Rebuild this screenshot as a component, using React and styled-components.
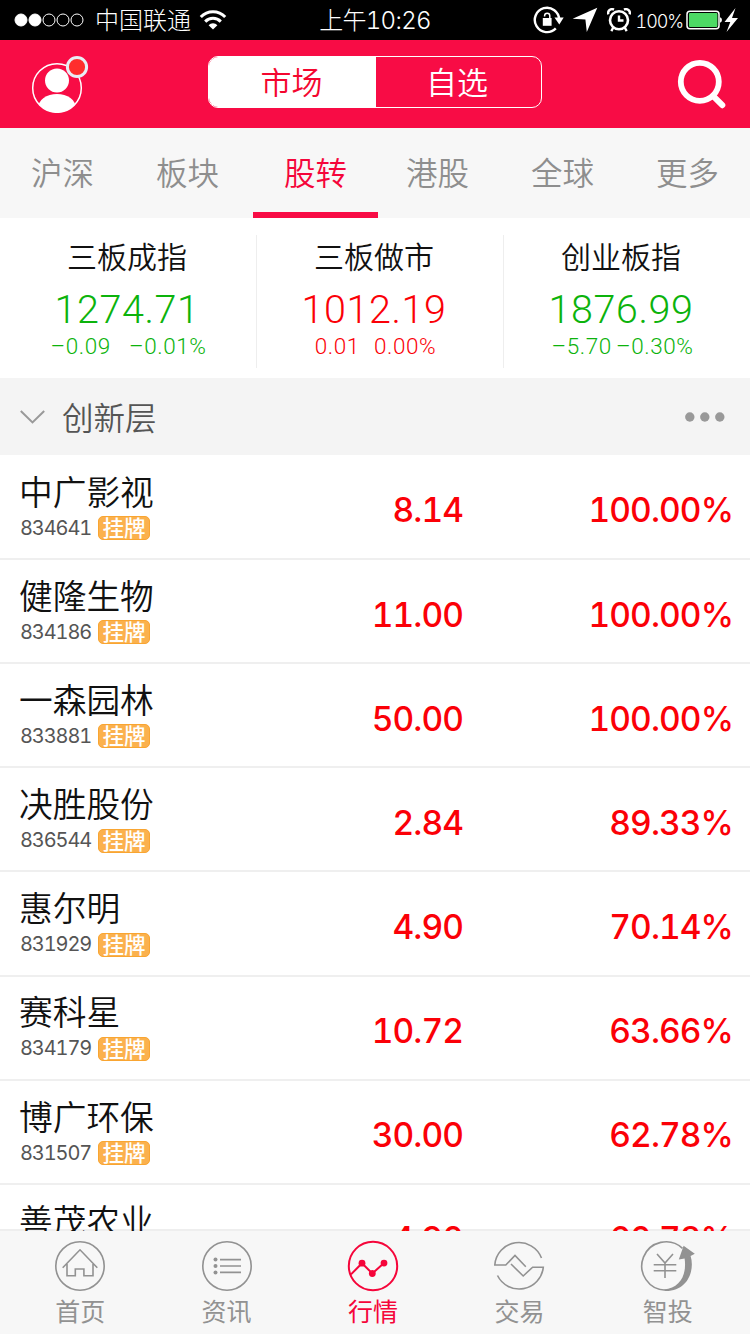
import React from "react";
import styled, { createGlobalStyle } from "styled-components";

const GlobalStyle = createGlobalStyle`
    * {
        box-sizing: border-box;
    }
    body {
        margin: 0;
        background: white;
        font-family: Inter, "Noto Sans CJK SC", sans-serif;
        font-weight: 350;
        font-variant-numeric: tabular-nums;
    }
    svg {
        display: block;
        flex: none;
    }
`;

const Screen = styled.div`
    display: flex;
    flex-direction: column;
    width: 750px;
    height: 1334px;
    overflow: hidden;
    background: white;
`;

const StatusBar = styled.div`
    display: grid;
    grid-template-columns: 1fr auto 1fr;
    align-items: center;
    flex: none;
    height: 40px;
    padding: 0 11px 0 14px;
    background: black;
    color: white;
    font-size: 24px;
    font-weight: 300;
`;

const StatusGroup = styled.div`
    display: flex;
    align-items: center;
    justify-content: ${({ end }) => (end ? "flex-end" : "flex-start")};
`;

const Carrier = styled.span`
    margin: 2px 8px 0 11px;
    line-height: 38px;
`;

const Clock = styled.span`
    margin-top: 2px;
    margin-right: 3px;
    line-height: 38px;
    letter-spacing: -0.7px;
`;

const StatusIcons = styled.div`
    display: flex;
    align-items: center;
    gap: 8.5px;
`;

const BatteryLevel = styled.span`
    margin: 2px 3px 0 5px;
    font-size: 18px;
    letter-spacing: -1.1px;
`;

const Header = styled.header`
    display: flex;
    align-items: center;
    justify-content: space-between;
    flex: none;
    height: 88px;
    padding: 0 23px 0 31px;
    background: #f80c45;
`;

const Segmented = styled.div`
    display: flex;
    width: 334px;
    height: 52px;
    margin-top: -5px;
    margin-left: -16px;
    border: 1px solid white;
    border-radius: 10px;
    overflow: hidden;
`;

const Segment = styled.div`
    width: ${({ active }) => (active ? 167 : 165)}px;
    padding-right: ${({ active }) => (active ? 2 : 3)}px;
    line-height: 52px;
    text-align: center;
    font-size: 31px;
    background: ${({ active }) => (active ? "white" : "transparent")};
    color: ${({ active }) => (active ? "#f4062f" : "white")};
`;

const Tabs = styled.nav`
    display: flex;
    flex: none;
    height: 90px;
    background: #f7f7f7;
`;

const Tab = styled.div`
    flex: none;
    width: 125px;
    height: 90px;
    margin: ${({ active }) => (active ? "0 -3px 0 3px" : 0)};
    line-height: 92px;
    text-align: center;
    font-size: 31.5px;
    color: ${({ active }) => (active ? "#f5053a" : "#8e8e8e")};
    box-shadow: ${({ active }) => (active ? "inset 0 -6px #f80c45" : "none")};
`;

const Indices = styled.section`
    display: grid;
    grid-template-columns: 257px 247px 246px;
    flex: none;
    height: 160px;
    padding: 17px 0 10px;
`;

const IndexCell = styled.div`
    display: flex;
    flex-direction: column;
    align-items: center;
    padding-right: ${({ inset }) => inset}px;
    border-right: 1px solid #eee;
    color: ${({ down }) => (down ? "#0cb30c" : "#fb0007")};
    &:last-child {
        border-right: none;
    }
`;

const IndexName = styled.div`
    font-size: 30px;
    line-height: 44px;
    color: #111;
`;

const IndexValue = styled.div`
    font-family: Roboto, sans-serif;
    font-size: 39.5px;
    font-weight: 350;
    line-height: 62px;
    letter-spacing: 0.6px;
`;

const IndexChange = styled.div`
    display: flex;
    gap: ${({ gap }) => gap}px;
    padding-left: 3px;
    font-family: Roboto, sans-serif;
    font-size: 22.5px;
    font-weight: 350;
    line-height: 10px;
    letter-spacing: 0.6px;
`;

const SectionBar = styled.div`
    display: flex;
    align-items: center;
    flex: none;
    height: 77px;
    padding: 0 25px 0 20px;
    background: #f4f4f4;
`;

const SectionTitle = styled.h2`
    flex: 1;
    margin: 5px 0 0 17px;
    font-size: 31.5px;
    font-weight: 350;
    line-height: 72px;
    color: #555;
`;

// the divider sits under the last, half visible row
const List = styled.div`
    flex: 1;
    min-height: 0;
    overflow: hidden;
    padding-top: 0.8px;
    box-shadow: inset 0 -2px #eee;
`;

const Row = styled.div`
    display: grid;
    grid-template-columns: 200px 244px 1fr;
    align-items: center;
    height: 104.17px;
    padding: 0 17px 0 19px;
    border-bottom: 2px solid #efefef;
`;

const StockName = styled.div`
    margin-bottom: 2.6px;
    font-size: 33.7px;
    line-height: 40px;
    color: #111;
`;

const StockMeta = styled.div`
    display: flex;
    align-items: center;
    height: 26px;
`;

const StockCode = styled.span`
    width: 79px;
    padding-left: 1px;
    font-size: 20px;
    font-weight: 400;
    line-height: 22px;
    padding-bottom: 1px;
    letter-spacing: -1.1px;
    color: #555;
`;

const Badge = styled.span`
    width: 52px;
    height: 24px;
    border: 1px solid #f9a531;
    border-radius: 5px;
    background: #fbb14d;
    color: white;
    font-size: 21.5px;
    font-weight: 500;
    line-height: 22px;
    text-align: center;
`;

const Figure = styled.div`
    margin-top: 7px;
    text-align: right;
    font-size: 33.5px;
    font-weight: 450;
    letter-spacing: -0.9px;
    color: #fb0007;
`;

const TabBar = styled.nav`
    display: flex;
    flex: none;
    height: 103px;
    padding: 0 11px 0 7px;
    background: #f7f7f7;
`;

const TabBarItem = styled.div`
    display: flex;
    flex: 1;
    flex-direction: column;
    align-items: center;
    padding-top: 9px;
    font-size: 25px;
    font-weight: 400;
    line-height: 39px;
    color: ${({ active }) => (active ? "#f5053a" : "#929292")};
    &:last-child span {
        padding-left: 4px;
    }
`;

function Signal() {
    return (
        <svg width="70" height="14" viewBox="0 0 70 14" stroke="white">
            {[7, 21, 35, 49, 63].map((x, i) => (
                <circle
                    key={x}
                    cx={x}
                    cy="7"
                    r="6"
                    fill={i < 2 ? "white" : "none"}
                />
            ))}
        </svg>
    );
}

function Wifi() {
    return (
        <svg width="28" height="20" viewBox="0 0 28 20" fill="none">
            <path
                d="M1.8 7a17 17 0 0 1 24.4 0M6.2 11.6a11 11 0 0 1 15.6 0"
                stroke="white"
                strokeWidth="3"
            />
            <path d="M9.6 15.2a6.2 6.2 0 0 1 8.8 0L14 19.5z" fill="white" />
        </svg>
    );
}

function RotationLock() {
    return (
        <svg width="31" height="28" viewBox="0 0 31 28" fill="none">
            <path
                d="M22.8 22.4a12.2 12.2 0 1 1 3.4-8.6"
                stroke="white"
                strokeWidth="2.4"
            />
            <path d="M21.5 11.5h9.2L26.3 18.5z" fill="white" />
            <path d="M9.8 12h8.8v7.8H9.8z" fill="white" />
            <path
                d="M11.6 10.4V9.8a2.6 2.6 0 0 1 5.2 0V13"
                stroke="white"
                strokeWidth="1.5"
            />
        </svg>
    );
}

function Location() {
    return (
        <svg width="26" height="26" viewBox="0 0 26 26">
            <path d="M25.3.8L14.8 25l-1.4-12.4L.6 11.7z" fill="white" />
        </svg>
    );
}

function Alarm() {
    return (
        <svg width="24" height="24" viewBox="0 0 24 24" fill="none">
            <circle cx="12" cy="12.2" r="9" stroke="white" strokeWidth="2.6" />
            <path
                d="M12 7.5v5h4.5M6.3 19.5l-2 3.6M17.7 19.5l2 3.6"
                stroke="white"
                strokeWidth="2.4"
            />
            <path
                d="M1.3 6.3A4 4 0 0 1 7 1.6M17 1.6a4 4 0 0 1 5.7 4.7"
                stroke="white"
                strokeWidth="2.4"
            />
        </svg>
    );
}

function Battery() {
    return (
        <svg width="53" height="24" viewBox="0 0 53 24">
            <rect
                x="1"
                y="3.2"
                width="32"
                height="17.6"
                rx="3"
                fill="none"
                stroke="white"
                strokeWidth="1.5"
            />
            <rect x="3" y="5" width="28.4" height="14" rx="1" fill="#4cd964" />
            <path d="M34 9.3q2 .5 2 2.7t-2 2.7z" fill="white" />
            <path
                d="M49.5 0L38.5 14h5.8l-3.8 10L52 10h-6z"
                fill="white"
            />
        </svg>
    );
}

function Avatar() {
    return (
        <svg width="58" height="58" viewBox="0 0 58 58">
            <clipPath id="face">
                <circle cx="26" cy="33" r="24.5" />
            </clipPath>
            <g clipPath="url(#face)" fill="white">
                <circle cx="26" cy="25.5" r="12" />
                <ellipse cx="26" cy="53" rx="19" ry="14" />
            </g>
            <circle
                cx="26"
                cy="33"
                r="24.3"
                fill="none"
                stroke="white"
                strokeWidth="1.5"
            />
            <circle
                cx="46"
                cy="12"
                r="9.6"
                fill="#ff2d2d"
                stroke="#e8eef5"
                strokeWidth="3"
            />
        </svg>
    );
}

function SearchIcon() {
    return (
        <svg width="50" height="50" viewBox="0 0 50 50" fill="none">
            <g stroke="white" strokeLinecap="round">
                <circle cx="22.8" cy="22.8" r="19" strokeWidth="5.8" />
                <path d="M36 36.8l9.3 9.4" strokeWidth="6" />
            </g>
        </svg>
    );
}

function ChevronDown() {
    return (
        <svg width="25" height="14" viewBox="0 0 25 14" fill="none">
            <path d="M.8 1l11.7 11.4L24.2 1" stroke="#999" strokeWidth="2" />
        </svg>
    );
}

function Dots() {
    return (
        <svg width="40" height="10" viewBox="0 0 40 10" fill="#999">
            <circle cx="4.8" cy="5" r="4.7" />
            <circle cx="19.8" cy="5" r="4.7" />
            <circle cx="34.8" cy="5" r="4.7" />
        </svg>
    );
}

function TabIcon({ children, ring = true, width = 1.6 }) {
    return (
        <svg
            width="58"
            height="53"
            viewBox="-29 -26 58 53"
            fill="none"
            stroke="currentColor"
            strokeWidth={width}
        >
            {ring && <circle r="24.2" />}
            {children}
        </svg>
    );
}

const tabIcons = {
    home: (
        <TabIcon>
            <path d="M-17.3 1.7L0-16.2 17.3 1.7M-13-2V9.7h8.3V3h8.6v6.7H13V-2" />
        </TabIcon>
    ),
    news: (
        <TabIcon>
            <path d="M-7-6.4h21M-7 0h21M-7 6.4h21" />
            <g fill="currentColor" stroke="none">
                <circle cx="-11.5" cy="-6.4" r="2" />
                <circle cx="-11.5" cy="0" r="2" />
                <circle cx="-11.5" cy="6.4" r="2" />
            </g>
        </TabIcon>
    ),
    quotes: (
        <TabIcon width={2}>
            <path d="M-22 8.4L-11-2.8-.7 7.5 11-2.9" />
            <g fill="currentColor" stroke="none">
                <circle cx="-11" cy="-2.8" r="3.4" />
                <circle cx="-.7" cy="7.5" r="3.4" />
                <circle cx="11" cy="-2.9" r="3.4" />
            </g>
        </TabIcon>
    ),
    trade: (
        <TabIcon ring={false}>
            <path d="M22.5-8A24.2 24.2 0 0 0-24.2-1h11L-4-10.5 6.8.7" />
            <path d="M-21.5 9.5A24.2 24.2 0 0 0 24.3 1.2H13.6L4.2 10-8-2" />
        </TabIcon>
    ),
    advice: (
        <TabIcon ring={false}>
            <path d="M16.5-17.7A24.2 24.2 0 1 0 0 24.2" />
            <path
                d="M-2 23.6C14 22 21 9 18.6-7.4L12.8-6.4 17.6-20.2 28.8-12.2 24.6-10C29 4 22 25 0 25z"
                fill="currentColor"
                stroke="none"
            />
            <path d="M-9-12L-1-3 7-12M-12.3-1.2h22.6M-12.3 4.7h22.6M-1-3v15" />
        </TabIcon>
    ),
};

const tabs = ["沪深", "板块", "股转", "港股", "全球", "更多"];

const indices = [
    { name: "三板成指", value: "1274.71", change: "–0.09", percent: "–0.01%", down: true, gap: 18, inset: 2 },
    { name: "三板做市", value: "1012.19", change: "0.01", percent: "0.00%", down: false, gap: 14, inset: 12 },
    { name: "创业板指", value: "1876.99", change: "–5.70", percent: "–0.30%", down: true, gap: 4, inset: 12 },
];

const stocks = [
    { name: "中广影视", code: "834641", price: "8.14", percent: "100.00%" },
    { name: "健隆生物", code: "834186", price: "11.00", percent: "100.00%" },
    { name: "一森园林", code: "833881", price: "50.00", percent: "100.00%" },
    { name: "决胜股份", code: "836544", price: "2.84", percent: "89.33%" },
    { name: "惠尔明", code: "831929", price: "4.90", percent: "70.14%" },
    { name: "赛科星", code: "834179", price: "10.72", percent: "63.66%" },
    { name: "博广环保", code: "831507", price: "30.00", percent: "62.78%" },
    { name: "善茂农业", code: "832790", price: "4.90", percent: "60.78%" },
];

const tabBar = [
    { icon: "home", label: "首页" },
    { icon: "news", label: "资讯" },
    { icon: "quotes", label: "行情" },
    { icon: "trade", label: "交易" },
    { icon: "advice", label: "智投" },
];

function Stock({ name, code, price, percent }) {
    return (
        <Row>
            <div>
                <StockName>{name}</StockName>
                <StockMeta>
                    <StockCode>{code}</StockCode>
                    <Badge>挂牌</Badge>
                </StockMeta>
            </div>
            <Figure>{price}</Figure>
            <Figure>{percent}</Figure>
        </Row>
    );
}

function App() {
    return (
        <Screen>
            <GlobalStyle />
            <StatusBar>
                <StatusGroup>
                    <Signal />
                    <Carrier>中国联通</Carrier>
                    <Wifi />
                </StatusGroup>
                <Clock>上午10:26</Clock>
                <StatusGroup end>
                    <StatusIcons>
                        <RotationLock />
                        <Location />
                        <Alarm />
                    </StatusIcons>
                    <BatteryLevel>100%</BatteryLevel>
                    <Battery />
                </StatusGroup>
            </StatusBar>
            <Header>
                <Avatar />
                <Segmented>
                    <Segment active>市场</Segment>
                    <Segment>自选</Segment>
                </Segmented>
                <SearchIcon />
            </Header>
            <Tabs>
                {tabs.map(tab => (
                    <Tab key={tab} active={tab === "股转"}>
                        {tab}
                    </Tab>
                ))}
            </Tabs>
            <Indices>
                {indices.map(({ name, value, change, percent, down, gap, inset }) => (
                    <IndexCell key={name} down={down} inset={inset}>
                        <IndexName>{name}</IndexName>
                        <IndexValue>{value}</IndexValue>
                        <IndexChange gap={gap}>
                            <span>{change}</span>
                            <span>{percent}</span>
                        </IndexChange>
                    </IndexCell>
                ))}
            </Indices>
            <SectionBar>
                <ChevronDown />
                <SectionTitle>创新层</SectionTitle>
                <Dots />
            </SectionBar>
            <List>
                {stocks.map(stock => (
                    <Stock key={stock.code} {...stock} />
                ))}
            </List>
            <TabBar>
                {tabBar.map(({ icon, label }) => (
                    <TabBarItem key={icon} active={icon === "quotes"}>
                        {tabIcons[icon]}
                        <span>{label}</span>
                    </TabBarItem>
                ))}
            </TabBar>
        </Screen>
    );
}

export default App;
